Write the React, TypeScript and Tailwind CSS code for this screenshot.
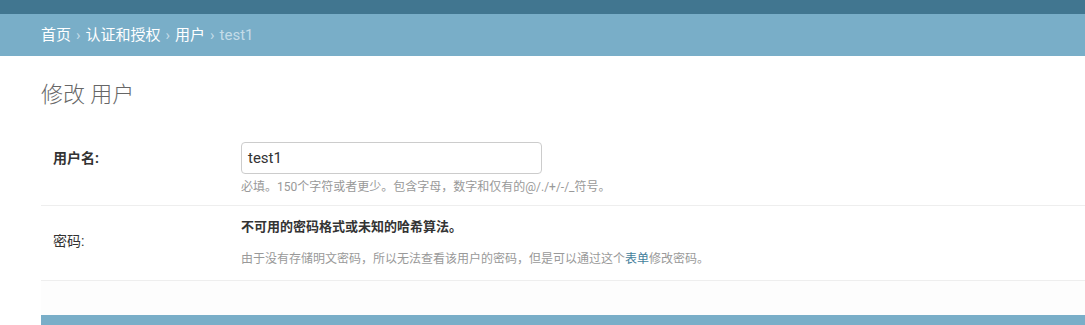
export default function App() {
  return (
    <div
      className="min-h-[325px] w-[1085px] overflow-hidden bg-white text-[13px] text-[#333]"
      style={{ fontFamily: "Roboto, 'Noto Sans CJK SC', sans-serif" }}
    >
      {/* Header strip */}
      <div className="h-[14px] bg-[#417690]" />

      {/* Breadcrumbs */}
      <div className="flex h-[42px] items-center bg-[#79aec8] pl-[41px] text-[15px] text-white">
        <span>首页</span>
        <span className="mx-[5px] text-[#c4dce8]">›</span>
        <span>认证和授权</span>
        <span className="mx-[5px] text-[#c4dce8]">›</span>
        <span>用户</span>
        <span className="mx-[5px] text-[#c4dce8]">›</span>
        <span className="text-[#c4dce8]">test1</span>
      </div>

      {/* Content */}
      <div className="pl-[41px]">
        <h1 className="pt-[25px] text-[22px] leading-[28px] font-light text-[#666]">修改 用户</h1>

        <div className="mt-[23px]">
          {/* Username row */}
          <div className="flex h-[74px] border-b border-[#eee] pt-[10px]">
            <label className="w-[200px] pt-[8px] pl-[12px] text-[14px] font-bold leading-[16px] text-[#333]">
              用户名:
            </label>
            <div>
              <div className="flex h-[32px] w-[301px] items-center rounded-[4px] border border-[#ccc] px-[6px] text-[15px] text-[#333]">
                test1
              </div>
              <p className="mt-[6px] text-[12px] leading-[15px] text-[#999]">
                必填。150个字符或者更少。包含字母，数字和仅有的@/./+/-/_符号。
              </p>
            </div>
          </div>

          {/* Password row */}
          <div className="flex h-[75px] border-b border-[#eee] pt-[13px]">
            <label className="w-[200px] pt-[14px] pl-[12px] text-[14px] leading-[16px] text-[#333]">密码:</label>
            <div>
              <p className="leading-[16px] font-bold text-[#333]">不可用的密码格式或未知的哈希算法。</p>
              <p className="mt-[17px] text-[12px] leading-[15px] text-[#999]">
                由于没有存储明文密码，所以无法查看该用户的密码，但是可以通过这个
                <span className="text-[#447e9b]">表单</span>
                修改密码。
              </p>
            </div>
          </div>

          <div className="h-[34px] bg-[#fdfdfd]" />
          <div className="h-[20px] bg-[#79aec8]" />
        </div>
      </div>
    </div>
  );
}
